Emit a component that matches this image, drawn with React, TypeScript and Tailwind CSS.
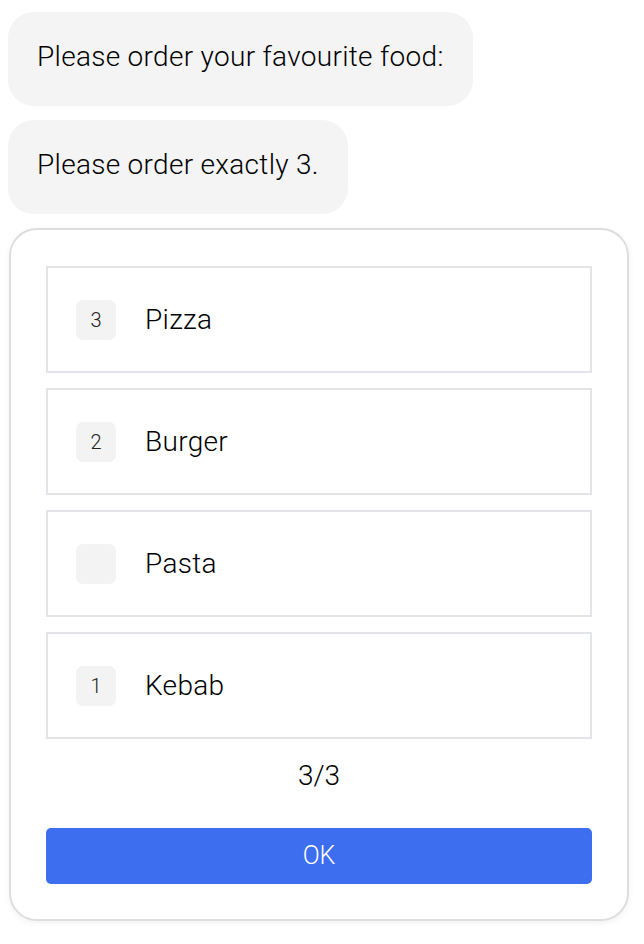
const items = [
  { rank: '3', label: 'Pizza' },
  { rank: '2', label: 'Burger' },
  { rank: '', label: 'Pasta' },
  { rank: '1', label: 'Kebab' },
];

function Bubble({ children }: { children: React.ReactNode }) {
  return (
    <div className="self-start rounded-[26px] bg-[#f4f4f4] px-[29px] pt-[27px] pb-[31px] text-[28px] leading-[36px] font-light tracking-[0.3px] text-black">
      {children}
    </div>
  );
}

export default function App() {
  return (
    <div
      className="flex min-h-[944px] flex-col items-stretch gap-[14px] bg-white pt-[12px] pl-[8px]"
      style={{ fontFamily: 'Roboto, "Liberation Sans", sans-serif' }}
    >
      <Bubble>Please order your favourite food:</Bubble>
      <Bubble>Please order exactly 3.</Bubble>

      <div className="ml-[1px] flex w-[620px] flex-col rounded-[28px] border-2 border-[#dedede] bg-white px-[35px] pt-[36px] pb-[35px] shadow-[0_2px_6px_rgba(0,0,0,0.06)]">
        <div className="flex flex-col gap-[15px]">
          {items.map((item) => (
            <div
              key={item.label}
              className="flex h-[107px] shrink-0 items-center border-2 border-[#e2e4e8] pl-[28px]"
            >
              <div className="flex h-[40px] w-[40px] items-center justify-center rounded-[7px] bg-[#f3f3f3] text-[20px] font-light text-[#222]">
                {item.rank}
              </div>
              <span className="ml-[29px] text-[28px] font-light tracking-[0.3px] text-black">{item.label}</span>
            </div>
          ))}
        </div>

        <div className="mt-[20px] text-center text-[28px] leading-[34px] font-light text-black">3/3</div>

        <button className="mt-[35px] h-[56px] w-full rounded-[5px] bg-[#3d6ef0] text-[25px] font-light text-white">
          OK
        </button>
      </div>
    </div>
  );
}
